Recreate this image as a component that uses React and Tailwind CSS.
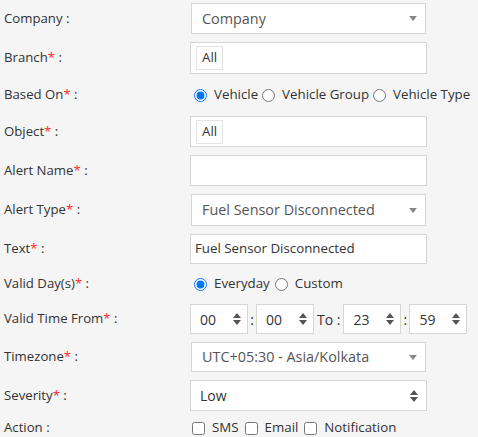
import React from "react";

const Req = () => <span className="text-[#ff2b2b]">*</span>;

const Label = ({ text, req }) => (
  <div className="w-[190px] shrink-0 pl-1 text-[13.2px] text-[#333]">
    {text}
    {req && <Req />} :
  </div>
);

const Caret = () => (
  <svg width="8" height="5" viewBox="0 0 8 5" className="shrink-0">
    <path d="M0 0h8L4 5z" fill="#888" />
  </svg>
);

const UpDown = () => (
  <svg width="8" height="12" viewBox="0 0 8 12" className="shrink-0">
    <path d="M4 0L8 5H0z M4 12L0 7h8z" fill="#555" />
  </svg>
);

const Select = ({ value }) => (
  <div className="ml-[1px] flex h-full w-[235px] items-center justify-between border border-[#d6d6d6] bg-white pl-[10px] pr-[8px] text-[14.4px] text-[#555]">
    <span>{value}</span>
    <Caret />
  </div>
);

const TagBox = () => (
  <div className="flex h-full w-[237px] items-center border border-[#d6d6d6] bg-white pl-[5px]">
    <span className="flex h-[24px] items-center border border-[#e3e3e3] px-[5px] text-[13.3px] text-[#333]">
      All
    </span>
  </div>
);

const TimeBox = ({ value }) => (
  <div className="flex h-full w-[58px] items-center justify-between border border-[#d6d6d6] bg-white pl-[9px] pr-[6px] text-[14px] text-[#333]">
    <span>{value}</span>
    <UpDown />
  </div>
);

const Radio = ({ label, checked }) => (
  <label className="flex items-center gap-[7px] whitespace-nowrap">
    <input type="radio" defaultChecked={checked} name={label} className="m-0 h-[13px] w-[13px]" />
    <span>{label}</span>
  </label>
);

const Check = ({ label }) => (
  <label className="flex items-center gap-[7px] whitespace-nowrap">
    <input type="checkbox" className="m-0 h-[13px] w-[13px]" />
    <span>{label}</span>
  </label>
);

export default function App() {
  return (
    <div
      className="flex h-[437px] w-[478px] flex-col gap-2 overflow-hidden bg-[#f5f5f5] pt-[3px]"
      style={{ fontFamily: '"Open Sans", sans-serif' }}
    >
      <div className="flex h-[31px] items-center">
        <Label text="Company" />
        <Select value="Company" />
      </div>
      <div className="flex h-[32px] items-center">
        <Label text="Branch" req />
        <TagBox />
      </div>
      <div className="flex h-[26px] items-center">
        <Label text="Based On" req />
        <div className="flex items-center gap-[4px] pl-[4px] text-[13.3px] text-[#333]">
          <Radio label="Vehicle" checked />
          <Radio label="Vehicle Group" />
          <Radio label="Vehicle Type" />
        </div>
      </div>
      <div className="flex h-[31px] items-center">
        <Label text="Object" req />
        <TagBox />
      </div>
      <div className="flex h-[31px] items-center">
        <Label text="Alert Name" req />
        <div className="h-full w-[237px] border border-[#d6d6d6] bg-white" />
      </div>
      <div className="flex h-[32px] items-center">
        <Label text="Alert Type" req />
        <Select value="Fuel Sensor Disconnected" />
      </div>
      <div className="flex h-[30px] items-center">
        <Label text="Text" req />
        <div className="flex h-full w-[237px] items-center border border-[#d6d6d6] bg-white pl-[4px] text-[13.3px] text-[#333]">
          Fuel Sensor Disconnected
        </div>
      </div>
      <div className="flex h-[24px] items-center">
        <Label text="Valid Day(s)" req />
        <div className="flex items-center gap-[5px] pl-[4px] text-[13.3px] text-[#333]">
          <Radio label="Everyday" checked />
          <Radio label="Custom" />
        </div>
      </div>
      <div className="flex h-[30px] items-center">
        <Label text="Valid Time From" req />
        <div className="flex h-full items-center text-[14px] text-[#333]">
          <TimeBox value="00" />
          <span className="w-[8px] text-center">:</span>
          <TimeBox value="00" />
          <span className="px-[3px]">To :</span>
          <TimeBox value="23" />
          <span className="w-[8px] text-center">:</span>
          <TimeBox value="59" />
        </div>
      </div>
      <div className="flex h-[30px] items-center">
        <Label text="Timezone" req />
        <Select value="UTC+05:30 - Asia/Kolkata" />
      </div>
      <div className="flex h-[31px] items-center">
        <Label text="Severity" req />
        <div className="flex h-full w-[237px] items-center justify-between border border-[#d6d6d6] bg-white pl-[9px] pr-[8px] text-[14px] text-[#333]">
          <span>Low</span>
          <UpDown />
        </div>
      </div>
      <div className="flex h-[18px] items-center">
        <Label text="Action" />
        <div className="flex items-center gap-[6px] pl-[2px] text-[13.3px] text-[#333]">
          <Check label="SMS" />
          <Check label="Email" />
          <Check label="Notification" />
        </div>
      </div>
    </div>
  );
}
